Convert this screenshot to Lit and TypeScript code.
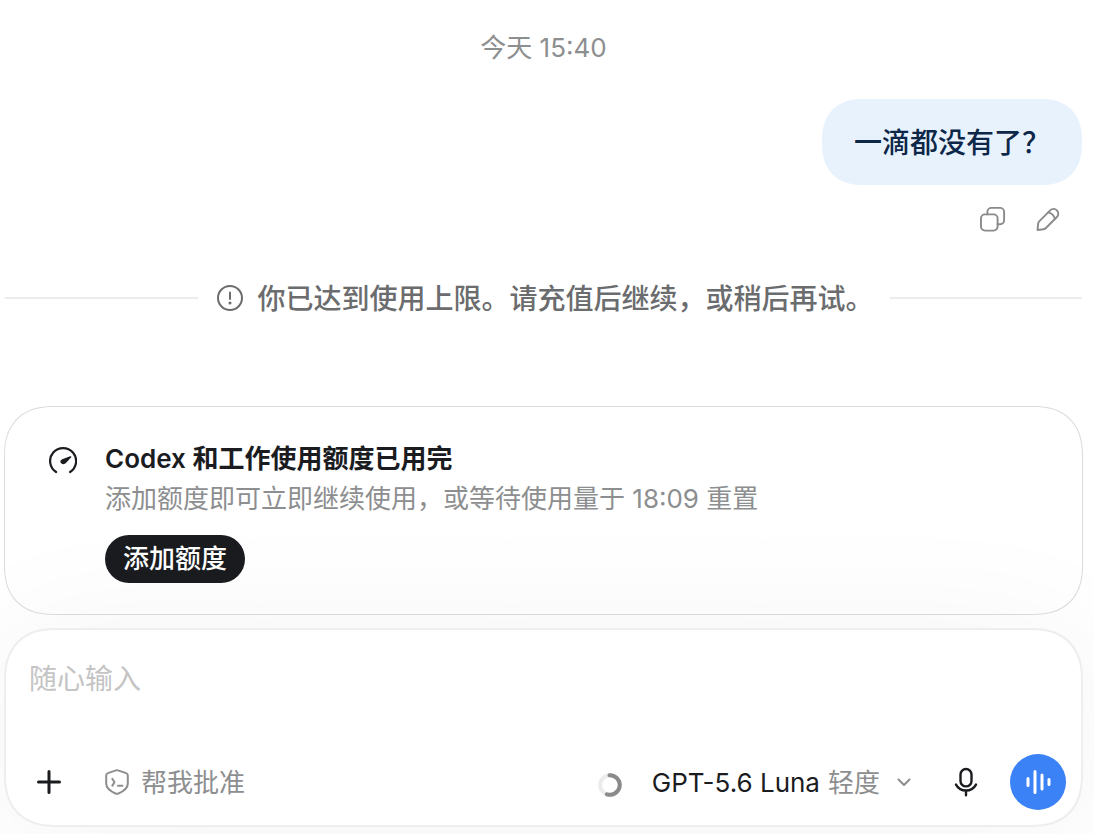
import { LitElement, html, css } from "lit";
import { customElement, state } from "lit/decorators.js";

@customElement("chat-message")
class ChatMessage extends LitElement {
  static styles = css`
    :host {
      display: flex;
      flex-direction: column;
      align-items: flex-end;
    }
    .bubble {
      margin: 0;
      padding: 23px 32px 21px;
      border-radius: 42px;
      corner-shape: superellipse(1.25);
      background: #e8f2fd;
      color: #0c2748;
      font-size: 28px;
      font-weight: 500;
      line-height: 42px;
    }
    .actions {
      display: flex;
      gap: 16px;
      margin: 14px 14px 0 0;
    }
    button {
      display: grid;
      place-items: center;
      width: 40px;
      height: 40px;
      padding: 0;
      border: 0;
      background: none;
      color: #8a8a8a;
      cursor: pointer;
    }
    svg {
      display: block;
      fill: none;
      stroke: currentColor;
      stroke-width: 1.9;
      stroke-linecap: round;
      stroke-linejoin: round;
    }
  `;

  render() {
    return html`
      <p class="bubble"><slot></slot></p>
      <div class="actions">
        <button type="button" aria-label="复制">
          <svg width="28" height="28" viewBox="0 0 28 28">
            <rect x="3" y="9.4" width="16.6" height="16.2" rx="4" />
            <path d="M9.400 9.400V6.900a4 4 0 0 1 4-4h8.700a4 4 0 0 1 4 4v8.400a4 4 0 0 1-4 4h-2.500" />
          </svg>
        </button>
        <button type="button" aria-label="编辑">
          <svg width="28" height="28" viewBox="0 0 28 28">
            <path d="M3.500 25l.6-6.200a4 4 0 0 1 1.100-2.400L16.200 5.300a4.700 4.700 0 0 1 6.700 0a4.700 4.700 0 0 1 0 6.700L11.900 23a4 4 0 0 1-2.300 1.200z" />
            <path d="M14.200 7.300a9 9 0 0 1 6.700 6.700" />
          </svg>
        </button>
      </div>
    `;
  }
}

@customElement("usage-card")
class UsageCard extends LitElement {
  static styles = css`
    :host {
      display: block;
    }
    .card {
      display: flex;
      gap: 28px;
      padding: 32px 44px 31px;
      border: 1px solid #dcdcdc;
      border-radius: 50px;
      corner-shape: superellipse(1.25);
      background: #fff;
    }
    .gauge {
      flex: none;
      display: block;
      margin-top: 7px;
      color: #1a1c1f;
    }
    h2,
    p {
      margin: 0;
      font-size: 26px;
      line-height: 40px;
    }
    h2 {
      color: #1a1c1f;
      font-weight: 600;
    }
    p {
      color: #8d8e8f;
    }
    button {
      display: block;
      height: 48px;
      margin-top: 16px;
      padding: 0 18px;
      border: 0;
      border-radius: 24px;
      background: #1a1c1f;
      color: #fff;
      font: inherit;
      font-size: 26px;
      font-weight: 500;
      line-height: 48px;
      cursor: pointer;
    }
  `;

  render() {
    return html`
      <section class="card">
        <svg class="gauge" width="28" height="28" viewBox="0 0 28 28" fill="none">
          <path d="M7.100 26A13 13 0 1 1 21.100 26" stroke="currentColor" stroke-width="2.200" stroke-linecap="round" />
          <path d="M21.200 10.300C22.200 9.900 22.700 10.700 22 11.400L17.200 16.800C16 18.200 13.600 18.700 12.200 17.300C10.700 15.800 11.300 13.900 13.200 13.200Z" fill="currentColor" />
        </svg>
        <div>
          <h2>Codex 和工作使用额度已用完</h2>
          <p>添加额度即可立即继续使用，或等待使用量于 18:09 重置</p>
          <button type="button">添加额度</button>
        </div>
      </section>
    `;
  }
}

@customElement("chat-composer")
class ChatComposer extends LitElement {
  @state() private draft = "";

  static styles = css`
    :host {
      display: block;
    }
    .composer {
      position: relative;
      padding: 28px 15px 15px 23px;
      border: 2px solid #eeeeee;
      border-radius: 52px;
      corner-shape: superellipse(1.25);
      background: #fff;
      box-shadow: 0 8px 140px rgba(0, 0, 0, 0.05);
    }
    textarea {
      display: block;
      box-sizing: border-box;
      width: 100%;
      height: 80px;
      margin: 0 0 16px;
      padding: 0;
      border: 0;
      outline: 0;
      resize: none;
      background: none;
      color: #1a1c1f;
      font: inherit;
      font-size: 28px;
      line-height: 42px;
    }
    textarea::placeholder {
      color: #c4c4c4;
      opacity: 1;
    }
    .bar,
    .group,
    button {
      display: flex;
      align-items: center;
    }
    .bar {
      justify-content: space-between;
      height: 56px;
    }
    button {
      flex: none;
      justify-content: center;
      height: 40px;
      padding: 0;
      border: 0;
      background: none;
      color: #1a1c1f;
      font: inherit;
      font-size: 26px;
      line-height: 40px;
      white-space: nowrap;
      cursor: pointer;
    }
    span {
      padding-top: 2px;
    }
    .square {
      width: 40px;
    }
    .approve {
      gap: 12px;
      margin-left: 36px;
      color: #8d8e8f;
    }
    .model {
      gap: 8px;
      margin: 0 26px 0 30px;
    }
    .muted {
      color: #8d8e8f;
    }
    .voice {
      width: 56px;
      height: 56px;
      margin-left: 24px;
      border-radius: 50%;
      background: #3b82f6;
      color: #fff;
    }
    svg {
      display: block;
      fill: none;
      stroke: currentColor;
      stroke-width: 2;
      stroke-linecap: round;
      stroke-linejoin: round;
    }
    .bold {
      stroke-width: 3;
    }
    .medium {
      stroke-width: 2.4;
    }
    .meter {
      margin-top: 6px;
      stroke-width: 4;
    }
    .track {
      stroke: #ececec;
    }
    .used {
      stroke: #8a8a8a;
    }
  `;

  private onInput(e: Event) {
    this.draft = (e.target as HTMLTextAreaElement).value;
  }

  render() {
    return html`
      <form class="composer" @submit=${(e: Event) => e.preventDefault()}>
        <textarea aria-label="随心输入" placeholder="随心输入" .value=${this.draft} @input=${this.onInput}></textarea>
        <div class="bar">
          <div class="group">
            <button class="square" type="button" aria-label="添加">
              <svg class="bold" width="28" height="28" viewBox="0 0 28 28">
                <path d="M14 3.500v21M3.500 14h21" />
              </svg>
            </button>
            <button class="approve" type="button">
              <svg width="24" height="26" viewBox="0 0 24 26">
                <path d="M10.900 1.400a3 3 0 0 1 2.200 0l8 2.700a2.400 2.400 0 0 1 1.700 2.300v8.400c0 4.400-4.600 7.600-9.300 9.700a3.600 3.600 0 0 1-3 0C5.800 22.400 1.200 19.200 1.200 14.800V6.400a2.400 2.400 0 0 1 1.700-2.300z" />
                <path d="M7.300 9.800l2.200 3.400l-2.200 3.400M13 16.800h4.400" />
              </svg>
              <span>帮我批准</span>
            </button>
          </div>
          <div class="group">
            <svg class="meter" width="24" height="24" viewBox="0 0 24 24" role="img" aria-label="上下文用量">
              <circle class="track" cx="12" cy="12" r="9.8" />
              <path class="used" d="M11.500 2.200a9.800 9.800 0 1 1-2.600 19.100" />
            </svg>
            <button class="model" type="button" aria-haspopup="listbox">
              <span>GPT-5.6 Luna</span>
              <span class="muted">轻度</span>
              <svg class="muted" width="32" height="16" viewBox="0 0 32 16">
                <path d="M10.500 5.500l5.500 5.500l5.500-5.500" />
              </svg>
            </button>
            <button class="square" type="button" aria-label="听写">
              <svg class="medium" width="24" height="30" viewBox="0 0 24 30">
                <rect x="6.5" y="2" width="11" height="17.4" rx="5.5" />
                <path d="M2 17.600a11.400 11.400 0 0 0 20 0M12 23.800v4.400" />
              </svg>
            </button>
            <button class="voice" type="button" aria-label="语音模式">
              <svg class="bold" width="28" height="28" viewBox="0 0 28 28">
                <path d="M4 10.500v7M11 3.500v21M18 7v14M25 11.500v5" />
              </svg>
            </button>
          </div>
        </div>
      </form>
    `;
  }
}

@customElement("app-root")
class AppRoot extends LitElement {
  static styles = css`
    :host {
      display: block;
      box-sizing: border-box;
      min-height: 100vh;
      padding: 28px 12px 7px 5px;
      overflow: hidden;
      background: #fff;
      font-family: Inter, "Noto Sans CJK SC", sans-serif;
    }
    .time {
      display: block;
      margin-bottom: 31px;
      color: #8d8e8f;
      font-size: 26px;
      line-height: 40px;
      text-align: center;
    }
    .notice {
      display: flex;
      align-items: center;
      margin: 38px 0 87px;
      color: #6b6c6e;
      font-size: 28px;
      font-weight: 500;
      line-height: 40px;
    }
    .notice::before,
    .notice::after {
      content: "";
      flex: 1;
      height: 2px;
      background: #ececec;
    }
    .text {
      display: flex;
      align-items: center;
      gap: 14px;
      padding: 0 16px 0 18px;
    }
    .text span {
      padding-top: 2px;
    }
    .alert {
      flex: none;
      display: block;
    }
    usage-card {
      margin: 0 -1px 13px;
    }
    chat-composer {
      margin: 0 -1px;
    }
  `;

  render() {
    return html`
      <main>
        <time class="time">今天 15:40</time>
        <chat-message>一滴都没有了？</chat-message>
        <div class="notice" role="status">
          <div class="text">
            <svg class="alert" width="28" height="28" viewBox="0 0 28 28" fill="none" stroke="currentColor" stroke-width="2" stroke-linecap="round">
              <circle cx="14" cy="14" r="12" />
              <path d="M14 8.500v6.500" />
              <circle cx="14" cy="19" r="1.500" fill="currentColor" stroke="none" />
            </svg>
            <span>你已达到使用上限。请充值后继续，或稍后再试。</span>
          </div>
        </div>
        <usage-card></usage-card>
        <chat-composer></chat-composer>
      </main>
    `;
  }
}
